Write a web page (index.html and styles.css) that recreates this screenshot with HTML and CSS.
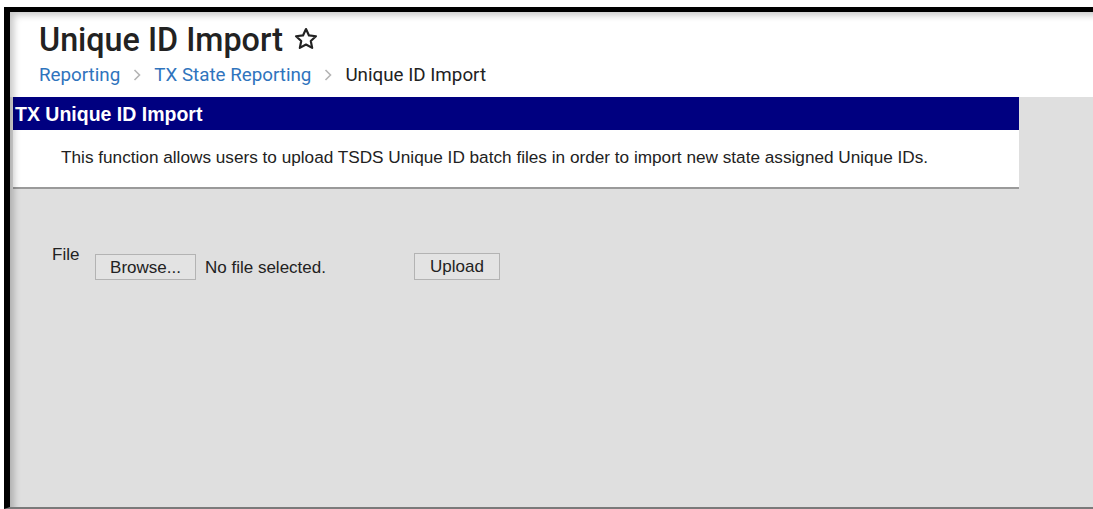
FILE: index.html
```html
<!DOCTYPE html>
<html lang="en">
<head>
<meta charset="utf-8">
<title>Unique ID Import</title>
<link rel="stylesheet" href="styles.css">
</head>
<body>
<div class="frame">
  <header class="page-header">
    <h1 class="page-title">Unique ID Import
      <svg class="star" viewBox="0 0 24 24" width="26" height="26" aria-hidden="true">
        <path d="M12 2.8l2.75 5.9 6.45.75-4.8 4.4 1.3 6.35L12 17.05 6.3 20.2l1.3-6.35-4.8-4.4 6.45-.75z" fill="none" stroke="#222" stroke-width="2" stroke-linejoin="round"/>
      </svg>
    </h1>
    <nav class="crumbs">
      <a class="crumb-link" href="#">Reporting</a>
      <svg class="chev" viewBox="0 0 8 12" width="8" height="12" aria-hidden="true"><path d="M1.5 1l5 5-5 5" fill="none" stroke="#b5b5b5" stroke-width="1.6"/></svg>
      <a class="crumb-link" href="#">TX State Reporting</a>
      <svg class="chev" viewBox="0 0 8 12" width="8" height="12" aria-hidden="true"><path d="M1.5 1l5 5-5 5" fill="none" stroke="#b5b5b5" stroke-width="1.6"/></svg>
      <span class="crumb-current">Unique ID Import</span>
    </nav>
  </header>
  <main class="content">
    <section class="panel">
      <div class="panel-title">TX Unique ID Import</div>
      <p class="panel-desc">This function allows users to upload TSDS Unique ID batch files in order to import new state assigned Unique IDs.</p>
    </section>
    <form class="upload-row">
      <span class="field-label">File</span>
      <span class="btn browse">Browse...</span>
      <span class="file-status">No file selected.</span>
      <span class="btn upload">Upload</span>
    </form>
  </main>
</div>
</body>
</html>
```

FILE: styles.css
```css
html, body {
  margin: 0;
  padding: 0;
  background: #fff;
  height: 509px;
  overflow: hidden;
}

.frame {
  position: relative;
  margin: 7px 0 0 4px;
  height: 502px;
  box-sizing: border-box;
  border-top: 5px solid #000;
  border-left: 6px solid #000;
  border-bottom: 2px solid #7a7a7a;
  display: flex;
  flex-direction: column;
}

/* soft inner shade along the top and left edges of the window */
.frame::after {
  content: "";
  position: absolute;
  inset: 0;
  pointer-events: none;
  box-shadow: inset 7px 6px 7px -3px rgba(0, 0, 0, 0.22);
}

.page-header {
  height: 85px;
  flex: none;
  background: #fff;
  padding: 8px 0 0 29px;
  box-sizing: border-box;
  font-family: Roboto, "Liberation Sans", sans-serif;
}

.page-title {
  margin: 0;
  font-size: 32.3px;
  font-weight: 500;
  line-height: 40px;
  color: #222;
  display: flex;
  align-items: center;
  gap: 10px;
}

.star {
  margin-top: -2px;
}

.crumbs {
  display: flex;
  align-items: center;
  gap: 13px;
  margin-top: 3px;
  font-size: 18.8px;
  line-height: 24px;
}

.crumb-link {
  color: #2f74bd;
  text-decoration: none;
}

.crumb-current {
  color: #222;
}

.content {
  flex: 1;
  background: #dfdfdf;
  font-family: "Liberation Sans", Arial, sans-serif;
  color: #222;
}

.panel {
  margin-left: 3px;
  width: 1006px;
  background: #fff;
  border-bottom: 2px solid #9a9a9a;
}

.panel-title {
  background: #000080;
  color: #fff;
  font-weight: 700;
  font-size: 19.5px;
  height: 33px;
  line-height: 34px;
  padding-left: 2px;
}

.panel-desc {
  margin: 0;
  height: 57px;
  line-height: 55px;
  padding-left: 48px;
  font-size: 17.2px;
}

.upload-row {
  display: flex;
  align-items: flex-start;
  margin: 57px 0 0 42px;
  font-size: 17px;
}

.field-label {
  line-height: 18px;
  width: 43px;
}

.btn {
  box-sizing: border-box;
  height: 26px;
  line-height: 25px;
  border: 1px solid #b3b3b3;
  background: #e3e3e3;
  text-align: center;
  margin-top: 8px;
}

.browse {
  width: 101px;
}

.file-status {
  margin: 8px 0 0 9px;
  line-height: 28px;
  width: 209px;
}

.upload {
  width: 86px;
  margin-top: 7px;
  height: 27px;
}
```
